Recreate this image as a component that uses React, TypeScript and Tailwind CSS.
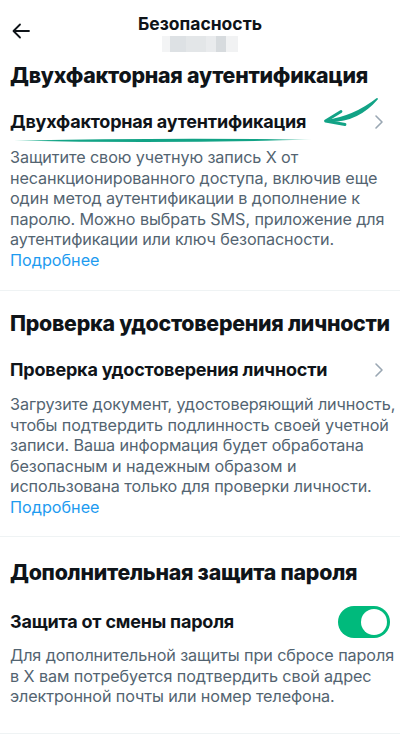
import React from 'react';

const font = { fontFamily: 'Inter, "Noto Sans", sans-serif' };

const Chevron = () => (
  <svg width="10" height="16" viewBox="0 0 10 16" className="shrink-0">
    <path d="M2 2 L8 8 L2 14" fill="none" stroke="#9aa7b3" strokeWidth="1.6" strokeLinecap="round" strokeLinejoin="round" />
  </svg>
);

const Toggle = () => (
  <div className="w-[52px] h-[32px] rounded-full bg-[#00ba7c] flex items-center justify-end pr-[3px] shrink-0">
    <div className="w-[26px] h-[26px] rounded-full bg-white" />
  </div>
);

const Desc = ({ lines }: { lines: string[] }) => (
  <p className="text-[16.2px] leading-[20.5px] text-[#536471] tracking-[-0.1px]">
    {lines.map((l) => (
      <span key={l} className="block whitespace-nowrap">{l}</span>
    ))}
  </p>
);

const More = () => <p className="text-[16.2px] leading-[20.5px] text-[#1d9bf0]">Подробнее</p>;

const SectionTitle = ({ children }: { children: React.ReactNode }) => (
  <h2 className="text-[21.3px] leading-[28px] font-extrabold tracking-[-0.25px] whitespace-nowrap">{children}</h2>
);

const RowTitle = ({ children }: { children: React.ReactNode }) => (
  <span className="text-[18px] leading-[24px] font-bold tracking-[-0.2px] whitespace-nowrap">{children}</span>
);

export default function App() {
  return (
    <div className="relative w-[400px] h-[737px] bg-white overflow-hidden text-[#0f1419]" style={font}>
      {/* header */}
      <div className="relative h-[54px]">
        <svg className="absolute left-[11px] top-[21px]" width="20" height="20" viewBox="0 0 20 20">
          <path d="M18 10 H3 M9 3.5 L2.5 10 L9 16.5" fill="none" stroke="#0f1419" strokeWidth="1.8" strokeLinecap="round" strokeLinejoin="round" />
        </svg>
        <div className="pt-[13px] text-center text-[17.5px] leading-[22px] font-bold">Безопасность</div>
        <div className="mx-auto mt-[1px] w-[76px] h-[16px] flex">
          <div className="w-[8px] bg-[#f3f4f5]" />
          <div className="w-[16px] bg-[#dde1e4]" />
          <div className="w-[20px] bg-[#e3e6e8]" />
          <div className="w-[10px] bg-[#e9ebed]" />
          <div className="w-[10px] bg-[#d7dbde]" />
          <div className="w-[12px] bg-[#f1f2f3]" />
        </div>
      </div>

      {/* section 1 */}
      <div className="px-[10px] pt-[7px] pb-[20px] border-b border-[#eff3f4]">
        <SectionTitle>Двухфакторная аутентификация</SectionTitle>
        <div className="mt-[21px] flex items-center justify-between pr-[6px]">
          <RowTitle>Двухфакторная аутентификация</RowTitle>
          <Chevron />
        </div>
        <div className="mt-[13px]">
          <Desc
            lines={[
              'Защитите свою учетную запись X от',
              'несанкционированного доступа, включив еще',
              'один метод аутентификации в дополнение к',
              'паролю. Можно выбрать SMS, приложение для',
              'аутентификации или ключ безопасности.',
            ]}
          />
          <More />
        </div>
      </div>

      {/* section 2 */}
      <div className="px-[10px] pt-[18px] pb-[19px] border-b border-[#eff3f4]">
        <SectionTitle>Проверка удостоверения личности</SectionTitle>
        <div className="mt-[21px] flex items-center justify-between pr-[6px]">
          <RowTitle>Проверка удостоверения личности</RowTitle>
          <Chevron />
        </div>
        <div className="mt-[12px]">
          <Desc
            lines={[
              'Загрузите документ, удостоверяющий личность,',
              'чтобы подтвердить подлинность своей учетной',
              'записи. Ваша информация будет обработана',
              'безопасным и надежным образом и',
              'использована только для проверки личности.',
            ]}
          />
          <More />
        </div>
      </div>

      {/* section 3 */}
      <div className="px-[10px] pt-[21px] pb-[26px] border-b border-[#eff3f4]">
        <SectionTitle>Дополнительная защита пароля</SectionTitle>
        <div className="mt-[20px] flex items-center justify-between">
          <RowTitle>Защита от смены пароля</RowTitle>
          <Toggle />
        </div>
        <div className="mt-[7px]">
          <Desc
            lines={[
              'Для дополнительной защиты при сбросе пароля',
              'в X вам потребуется подтвердить свой адрес',
              'электронной почты или номер телефона.',
            ]}
          />
        </div>
      </div>
      <div className="flex justify-end pr-[10px] pt-[4px]">
        <div className="w-[48px] h-[16px] rounded-t-full bg-[#f3f4f5]" />
      </div>

      {/* hand-drawn annotation over the first row */}
      <svg className="absolute left-0 top-0 pointer-events-none" width="400" height="160" viewBox="0 0 400 160">
        <defs>
          <linearGradient id="ul" x1="14" x2="312" y1="0" y2="0" gradientUnits="userSpaceOnUse">
            <stop offset="0" stopColor="#7fd6c0" />
            <stop offset="0.15" stopColor="#12a386" />
            <stop offset="0.85" stopColor="#12a386" />
            <stop offset="1" stopColor="#c2ebe0" />
          </linearGradient>
        </defs>
        <path d="M14 140.5 Q 163 137.5 312 139.5 Q 163 144 14 140.5 Z" fill="url(#ul)" />
        <path d="M377 99 C 363 110, 346 118, 326 121 C 348 122.5, 364 114, 377 99 Z" fill="#12a386" stroke="#12a386" strokeWidth="1.8" strokeLinejoin="round" />
        <path d="M341 111.5 L325.5 121 L345 124.5" fill="none" stroke="#12a386" strokeWidth="2.8" strokeLinecap="round" strokeLinejoin="round" />
      </svg>
    </div>
  );
}
